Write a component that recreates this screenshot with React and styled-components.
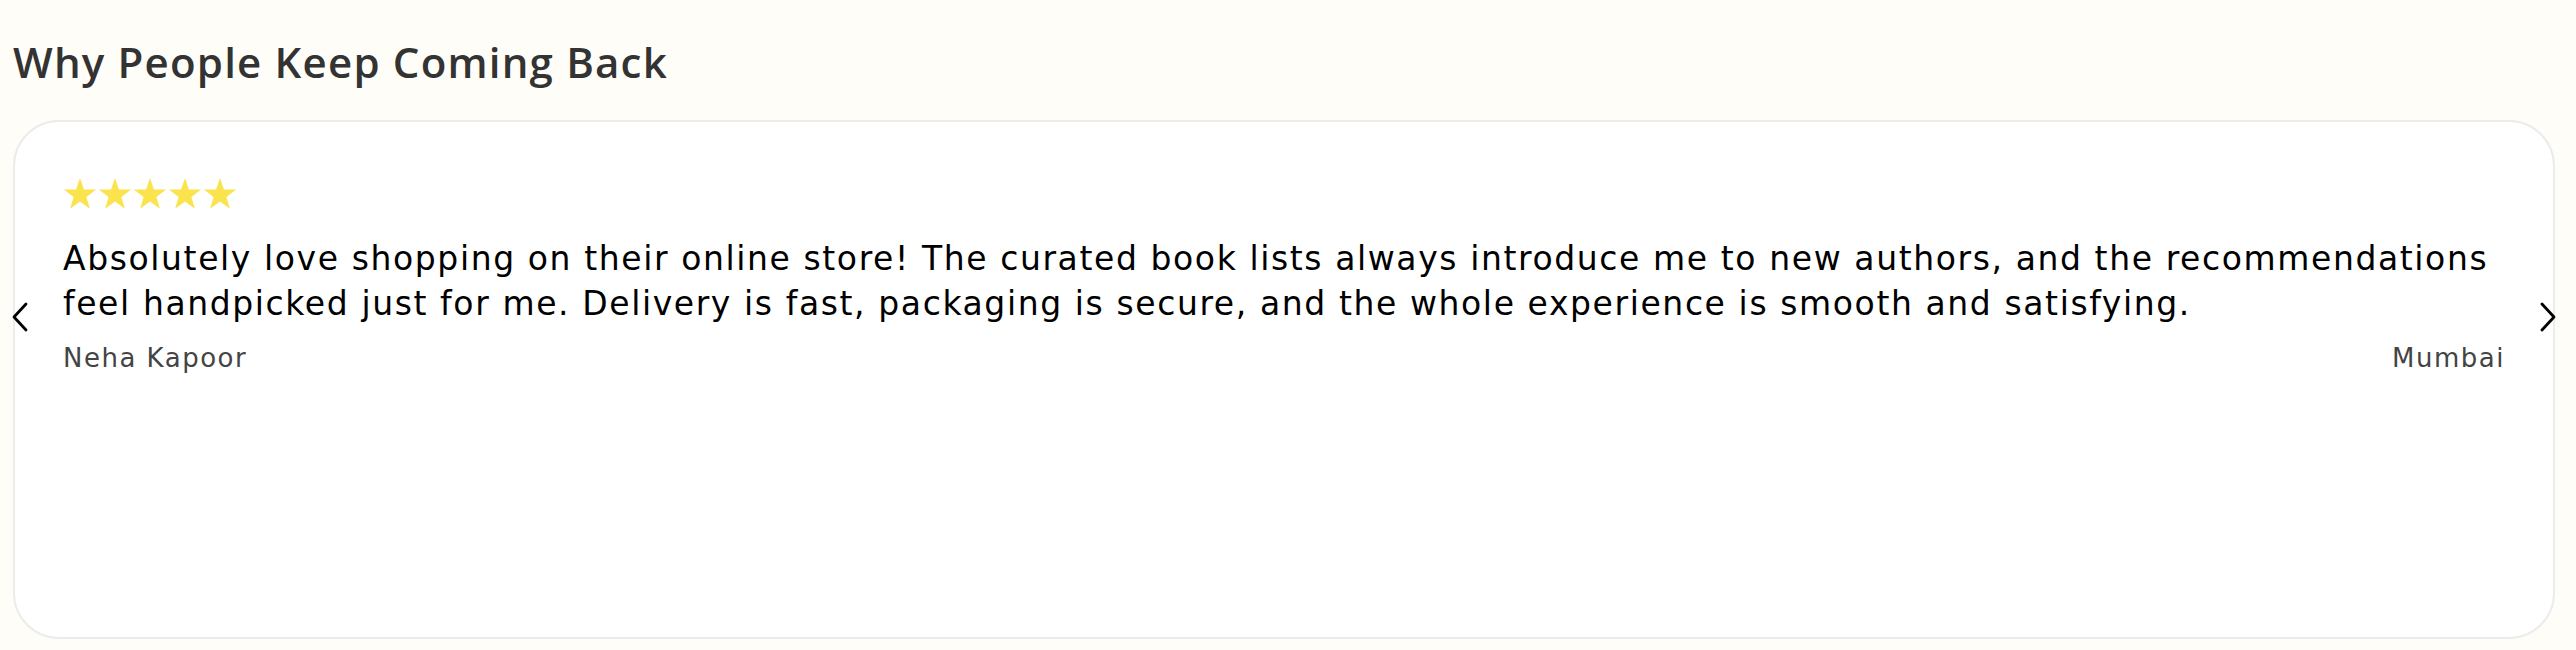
import styled, { createGlobalStyle } from "styled-components";

const GlobalStyle = createGlobalStyle`
  body {
    margin: 0;
    background: #fffdf8;
    font-family: "DejaVu Sans", sans-serif;
  }
`;

const Section = styled.section`
  padding: 38px 21px 11px 13px;
`;

const Title = styled.h2`
  margin: 0 0 34px;
  font-family: "Open Sans", "DejaVu Sans", sans-serif;
  font-size: 42px;
  line-height: 48px;
  font-weight: 600;
  color: #333;
  letter-spacing: 1.2px;
`;

const Slider = styled.div`
  position: relative;
`;

const Card = styled.div`
  box-sizing: border-box;
  height: 519px;
  padding: 55px 48px;
  background: #fff;
  border: 2px solid #ececec;
  border-radius: 46px;
`;

const Stars = styled.div`
  display: flex;
  gap: 1px;
  height: 33px;
  margin-bottom: 26px;
`;

const Quote = styled.p`
  margin: 0 0 15px;
  font-size: 33px;
  line-height: 45px;
  letter-spacing: 1.6px;
  color: #000;
`;

const Meta = styled.div`
  display: flex;
  justify-content: space-between;
  font-size: 26px;
  line-height: 34px;
  letter-spacing: 1.5px;
  color: #444;
`;

const Arrow = styled.button`
  position: absolute;
  top: 181px;
  ${props => (props.$side === "left" ? "left: -4px;" : "right: -4px;")}
  padding: 0;
  border: none;
  background: none;
  cursor: pointer;
  display: flex;
`;

function Star() {
  return (
    <svg width="34" height="33" viewBox="0 0 24 23">
      <polygon
        points="12,0.5 14.8,8.6 23.4,8.7 16.5,13.9 19,22.2 12,17.2 5,22.2 7.5,13.9 0.6,8.7 9.2,8.6"
        fill="#fae34c"
      />
    </svg>
  );
}

function Chevron({ side }) {
  const points = side === "left" ? "17,3 5,16 17,29" : "5,3 17,16 5,29";
  return (
    <svg width="22" height="32" viewBox="0 0 22 32">
      <polyline points={points} fill="none" stroke="#000" strokeWidth="2.8" strokeLinecap="round" strokeLinejoin="round" />
    </svg>
  );
}

export default function App() {
  return (
    <>
      <GlobalStyle />
      <Section>
        <Title>Why People Keep Coming Back</Title>
        <Slider>
          <Card>
            <Stars>
              {[0, 1, 2, 3, 4].map(i => (
                <Star key={i} />
              ))}
            </Stars>
            <Quote>
              Absolutely love shopping on their online store! The curated book lists always introduce me
              to new authors, and the recommendations feel handpicked just for me. Delivery is fast,
              packaging is secure, and the whole experience is smooth and satisfying.
            </Quote>
            <Meta>
              <span>Neha Kapoor</span>
              <span>Mumbai</span>
            </Meta>
          </Card>
          <Arrow $side="left" aria-label="Previous">
            <Chevron side="left" />
          </Arrow>
          <Arrow $side="right" aria-label="Next">
            <Chevron side="right" />
          </Arrow>
        </Slider>
      </Section>
    </>
  );
}
